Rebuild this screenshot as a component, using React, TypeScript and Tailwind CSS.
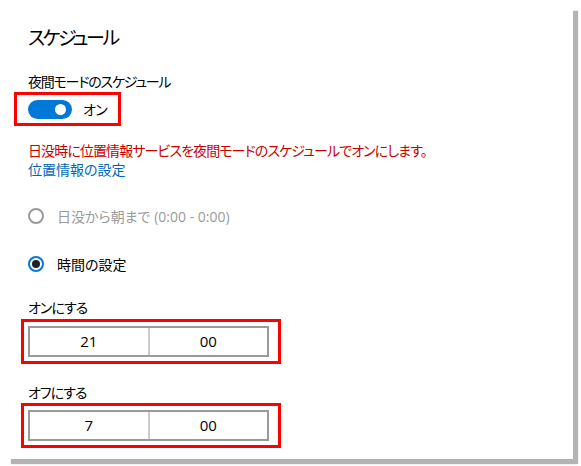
import React from "react";

const FONT = {
  fontFamily: '"Open Sans", "Noto Sans CJK JP", sans-serif',
};

type TimeProps = {
  hour: string;
  minute: string;
};

const TimeBox = ({ hour, minute }: TimeProps) => {
  return (
    <div className="ml-[-7px] w-[260px] border-[3px] border-[#ff0000] pt-[4px] pb-[4px] pl-[4px] pr-[8px]">
      <div className="flex h-[31px] w-[241px] border-2 border-[#9a9a9a] text-[15px] text-black">
        <div className="flex flex-1 items-center justify-center">{hour}</div>
        <div className="w-[2px] bg-[#cccccc]" />
        <div className="flex flex-1 items-center justify-center">{minute}</div>
      </div>
    </div>
  );
};

export default function App() {
  return (
    <div className="min-h-screen bg-white" style={FONT}>
      <div className="h-[459px] w-[573px] bg-white pl-[28px] pt-[24px] shadow-[8px_8px_1px_-3px_#b3b3b3] [font-feature-settings:'palt']">
        <h2 className="text-[19px] leading-[28px] tracking-[-2.5px] text-black">スケジュール</h2>

        <p className="mt-[20px] text-[14px] leading-[20px] tracking-[-1.2px] text-black">
          夜間モードのスケジュール
        </p>

        {/* toggle */}
        <div className="ml-[-14px] flex h-[34px] w-[107px] items-center border-[3px] border-[#ff0000] pl-[11px]">
          <div className="relative h-[19px] w-[44px] rounded-full bg-[#0078d7]">
            <div className="absolute right-[6px] top-[4px] h-[11px] w-[11px] rounded-full bg-white" />
          </div>
          <span className="ml-[11px] text-[14px] tracking-[-0.5px] text-black">オン</span>
        </div>

        <p className="mt-[15px] text-[14px] leading-[19px] tracking-[-0.9px] text-[#c80000]">
          日没時に位置情報サービスを夜間モードのスケジュールでオンにします。
        </p>
        <p className="text-[14px] leading-[19px] text-[#0067b8]">位置情報の設定</p>

        {/* radios */}
        <div className="mt-[27px] flex h-[20px] items-center">
          <div className="h-[16px] w-[16px] rounded-full border-2 border-[#9a9a9a]" />
          <span className="ml-[13px] text-[14px] text-[#9a9a9a]">
            日没から朝まで (0:00 - 0:00)
          </span>
        </div>
        <div className="mt-[28px] flex h-[20px] items-center">
          <div className="flex h-[16px] w-[16px] items-center justify-center rounded-full border-2 border-[#0078d7]">
            <div className="h-[8px] w-[8px] rounded-full bg-[#222]" />
          </div>
          <span className="ml-[13px] text-[14px] text-black">時間の設定</span>
        </div>

        <p className="mt-[24px] text-[14px] leading-[20px] tracking-[-1px] text-black">オンにする</p>
        <div className="mt-[1px]">
          <TimeBox hour="21" minute="00" />
        </div>

        <p className="mt-[19px] text-[14px] leading-[20px] tracking-[-1px] text-black">オフにする</p>
        <TimeBox hour="7" minute="00" />
      </div>
    </div>
  );
}
